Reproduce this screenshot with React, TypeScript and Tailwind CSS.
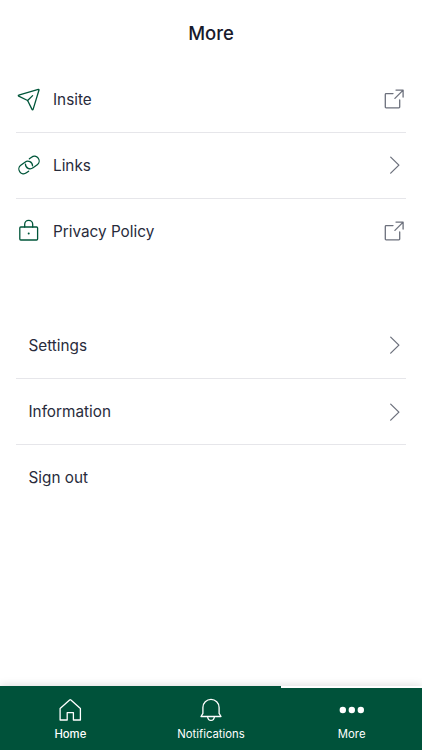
import type { ReactNode } from "react";

const stroke = {
  fill: "none",
  stroke: "currentColor",
  strokeLinecap: "round" as const,
  strokeLinejoin: "round" as const,
};

function PlaneIcon() {
  return (
    <svg className="size-6" viewBox="0 0 24 24" strokeWidth={1.3} {...stroke}>
      <path d="M1.7 8.1 21.3 2.4c.5-.1.8.1.7.6L16.1 22.4c-.2.6-.9.6-1.1 0L10.6 13.5 1.7 9.2c-.5-.3-.5-1 0-1.1Z" />
      <path d="m10.6 13.5 5-4.9" />
    </svg>
  );
}

function LinkIcon() {
  return (
    <svg className="size-6" viewBox="0 0 24 24" strokeWidth={1.3} {...stroke}>
      <g transform="translate(12 12) rotate(-37)">
        <path d="M-4 4.7H-6.8A4.7 4.7 0 0 1-6.8-4.7H-1.5A4.7 4.7 0 0 1 2.3 2.8" />
        <path d="M4-4.7H6.8A4.7 4.7 0 0 1 6.8 4.7H1.5A4.7 4.7 0 0 1-2.3-2.8" />
      </g>
    </svg>
  );
}

function LockIcon() {
  return (
    <svg className="size-6" viewBox="0 0 24 24" strokeWidth={1.3} {...stroke}>
      <rect x="2.8" y="8" width="17.8" height="13" rx="1" />
      <path d="M7.7 8V5.3a4 4 0 0 1 8 0V8" />
      <circle cx="11.7" cy="14.5" r="1" fill="currentColor" stroke="none" />
    </svg>
  );
}

function ExternalIcon() {
  return (
    <svg className="size-6" viewBox="0 0 24 24" strokeWidth={1.3} {...stroke}>
      <path d="M11 6.6H4.1a.8.8 0 0 0-.8.8V20a.8.8 0 0 0 .8.8h12.8a.8.8 0 0 0 .8-.8v-7" />
      <path d="m12.9 11.4 8-8M14 3.1h7.1v7" />
    </svg>
  );
}

function ChevronIcon() {
  return (
    <svg className="size-6" viewBox="0 0 24 24" strokeWidth={1.3} {...stroke}>
      <path d="m8.7 4.1 8.2 8-8.2 8" />
    </svg>
  );
}

function HomeIcon() {
  return (
    <svg className="size-6" viewBox="0 0 24 24" strokeWidth={1.3} {...stroke}>
      <path d="M11.6 1.9a1 1 0 0 1 1.3 0L22.4 10.5v11.5h-7v-7.4H9.2v7.4H2.1V10.5Z" />
    </svg>
  );
}

function BellIcon() {
  return (
    <svg className="size-6" viewBox="0 0 24 24" strokeWidth={1.3} {...stroke}>
      <path d="M3.9 15.4V9.5a8.1 8.1 0 0 1 16.2 0v5.9l1.9 3.1H2Z" />
      <path d="M8.6 18.7c.5 4.9 6.3 4.9 6.8 0" />
    </svg>
  );
}

function DotsIcon() {
  return (
    <svg className="h-6 w-7" viewBox="0 0 28 24" fill="currentColor">
      <circle cx="4.8" cy="12" r="3.2" />
      <circle cx="13.8" cy="12" r="3.2" />
      <circle cx="22.8" cy="12" r="3.2" />
    </svg>
  );
}

interface RowProps {
  label: string;
  icon?: ReactNode;
  end?: ReactNode;
  last?: boolean;
}

function Row({ label, icon, end, last }: RowProps) {
  return (
    <li className={`flex h-[66.2px] items-center border-b ${last ? "border-transparent" : "border-[#e6e6ea]"}`}>
      {icon ? <span className="mr-[12.5px] ml-[0.5px] text-[#00563a]">{icon}</span> : <span className="w-[12.5px]" />}
      <span className="flex-1 pt-px text-[15.3px] leading-6">{label}</span>
      <span className="mr-[0.4px] text-[#6c707c]">{end}</span>
    </li>
  );
}

function Tab({ label, icon, active }: { label: string; icon: ReactNode; active?: boolean }) {
  return (
    <button className="flex flex-1 flex-col items-center pt-[10px] text-white">
      {icon}
      <span className={`mt-1 text-[11.3px] leading-4 ${active ? "font-medium" : ""}`}>{label}</span>
    </button>
  );
}

export default function App() {
  return (
    <div className="flex h-[750px] w-[422px] flex-col overflow-hidden bg-white font-['Inter',sans-serif] text-[#282b3b]">
      <header className="flex h-[66.5px] shrink-0 items-center justify-center">
        <h1 className="text-[18.5px] leading-6 font-medium text-[#171a2b]">More</h1>
      </header>
      <main className="flex-1 px-4">
        <ul>
          <Row label="Insite" icon={<PlaneIcon />} end={<ExternalIcon />} />
          <Row label="Links" icon={<LinkIcon />} end={<ChevronIcon />} />
          <Row label="Privacy Policy" icon={<LockIcon />} end={<ExternalIcon />} last />
        </ul>
        <ul className="mt-[47.7px]">
          <Row label="Settings" end={<ChevronIcon />} />
          <Row label="Information" end={<ChevronIcon />} />
          <Row label="Sign out" last />
        </ul>
      </main>
      <footer className="h-16 shrink-0 shadow-[0_-1px_8px_rgba(0,0,0,0.13)]">
        <div className="flex h-0.5 bg-white">
          <div className="w-[281px] bg-[#00523a]" />
        </div>
        <nav className="flex h-[62px] bg-[#00523a]">
          <Tab label="Home" icon={<HomeIcon />} active />
          <Tab label="Notifications" icon={<BellIcon />} />
          <Tab label="More" icon={<DotsIcon />} />
        </nav>
      </footer>
    </div>
  );
}
